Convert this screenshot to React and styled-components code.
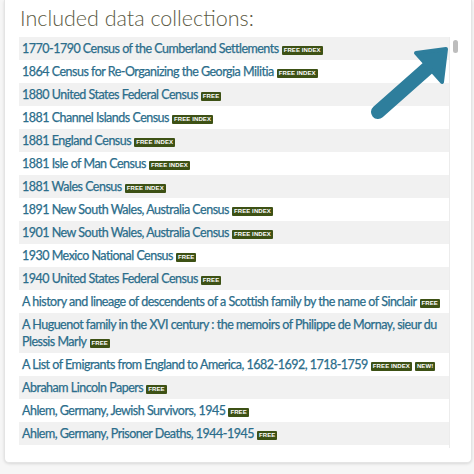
import React from 'react';
import styled, { createGlobalStyle } from 'styled-components';

const GlobalStyle = createGlobalStyle`
  html, body {
    margin: 0;
    padding: 0;
    background: #f6f6f6;
    font-family: Lato, "Liberation Sans", sans-serif;
  }
`;

const Page = styled.div`
  position: relative;
  width: 474px;
  height: 474px;
  overflow: hidden;
  padding: 0 2px 0 4px;
  box-sizing: border-box;
`;

const Card = styled.div`
  background: #fff;
  border: 1px solid #e4e4e4;
  border-top: 0;
  border-radius: 0 0 5px 5px;
  box-shadow: 0 1px 3px rgba(0, 0, 0, 0.12);
  padding: 5px 11px 14px 14px;
`;

const Title = styled.h2`
  margin: 0 0 5px 1px;
  font-family: Lato, "Liberation Sans", sans-serif;
  font-weight: 300;
  font-size: 21.5px;
  line-height: 27px;
  color: #5b5a44;
`;

const ScrollBox = styled.div`
  display: flex;
  height: 411px;
  overflow: hidden;
`;

const List = styled.ul`
  flex: 1;
  list-style: none;
  margin: 0;
  padding: 0;
`;

const Row = styled.li`
  background: ${p => (p.$odd ? '#f1f1f1' : '#fff')};
  padding: 3px 2px 3px 3px;
  font-size: 12.5px;
  letter-spacing: -0.5px;
  line-height: 17px;
  color: #2b6d8b;
  -webkit-text-stroke: 0.25px #2b6d8b;
`;

const Badge = styled.span`
  display: inline-block;
  background: #3d5115;
  color: #fff;
  -webkit-text-stroke: 0;
  font-family: "Liberation Sans", Arial, sans-serif;
  font-weight: 700;
  font-size: 6px;
  line-height: 9px;
  padding: 0 2px;
  margin-left: 3px;
  border-radius: 1px;
  vertical-align: 1px;
  letter-spacing: 0.1px;
`;

const Track = styled.div`
  width: 10px;
  border-left: 1px solid #ececec;
  display: flex;
  justify-content: center;
  padding-top: 3px;
`;

const Thumb = styled.div`
  width: 5px;
  height: 13px;
  border-radius: 3px;
  background: #bdbdbd;
`;

const Arrow = styled.svg`
  position: absolute;
  left: 366px;
  top: 44px;
  pointer-events: none;
`;

const items = [
  ['1770-1790 Census of the Cumberland Settlements', ['FREE INDEX']],
  ['1864 Census for Re-Organizing the Georgia Militia', ['FREE INDEX']],
  ['1880 United States Federal Census', ['FREE']],
  ['1881 Channel Islands Census', ['FREE INDEX']],
  ['1881 England Census', ['FREE INDEX']],
  ['1881 Isle of Man Census', ['FREE INDEX']],
  ['1881 Wales Census', ['FREE INDEX']],
  ['1891 New South Wales, Australia Census', ['FREE INDEX']],
  ['1901 New South Wales, Australia Census', ['FREE INDEX']],
  ['1930 Mexico National Census', ['FREE']],
  ['1940 United States Federal Census', ['FREE']],
  ['A history and lineage of descendents of a Scottish family by the name of Sinclair', ['FREE']],
  ['A Huguenot family in the XVI century : the memoirs of Philippe de Mornay, sieur du Plessis Marly', ['FREE']],
  ['A List of Emigrants from England to America, 1682-1692, 1718-1759', ['FREE INDEX', 'NEW!']],
  ['Abraham Lincoln Papers', ['FREE']],
  ['Ahlem, Germany, Jewish Survivors, 1945', ['FREE']],
  ['Ahlem, Germany, Prisoner Deaths, 1944-1945', ['FREE']],
];

export default function App() {
  return (
    <Page>
      <GlobalStyle />
      <Card>
        <Title>Included data collections:</Title>
        <ScrollBox>
          <List>
            {items.map(([name, badges], i) => (
              <Row key={name} $odd={i % 2 === 0}>
                {name}
                {badges.map(b => (
                  <Badge key={b}>{b}</Badge>
                ))}
              </Row>
            ))}
          </List>
          <Track>
            <Thumb />
          </Track>
        </ScrollBox>
      </Card>
      <Arrow width="86" height="76" viewBox="0 0 86 76">
        <line x1="12" y1="68" x2="64" y2="22" stroke="#2e7e9c" strokeWidth="14" strokeLinecap="round" />
        <polygon points="80,5 50,9 76,38" fill="#2e7e9c" stroke="#2e7e9c" strokeWidth="4" strokeLinejoin="round" />
      </Arrow>
    </Page>
  );
}
